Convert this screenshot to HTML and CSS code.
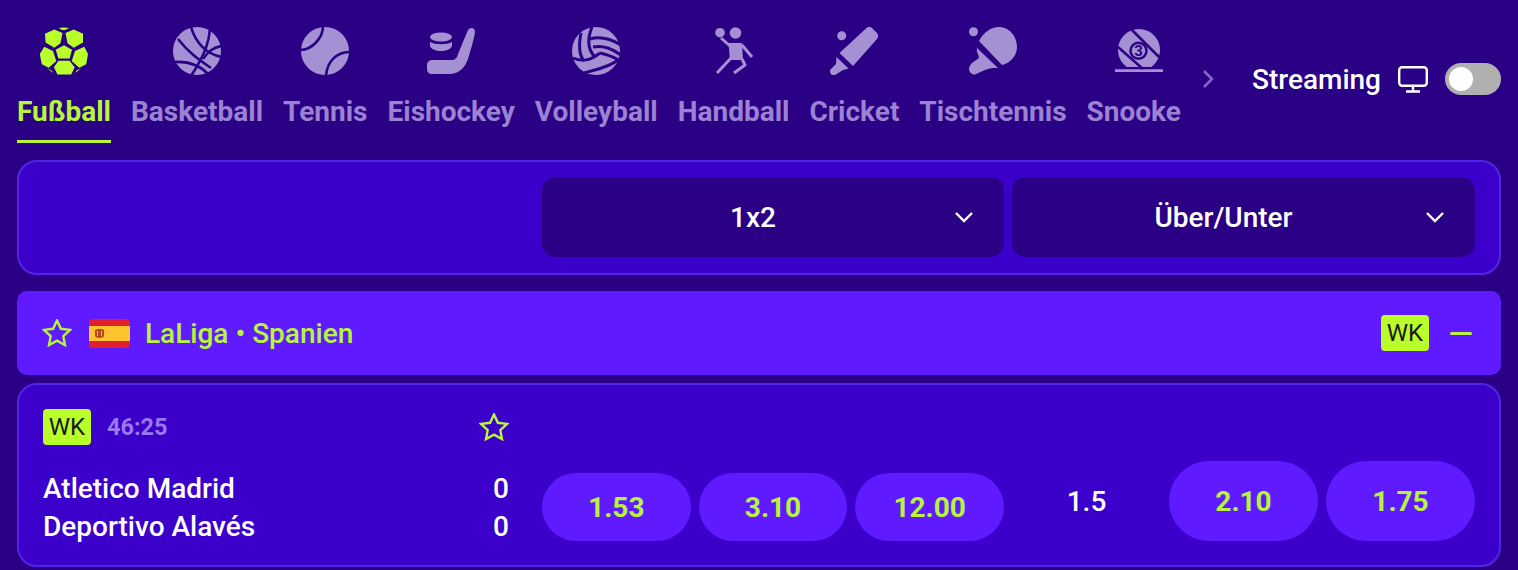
FILE: index.html
```html
<!DOCTYPE html>
<html lang="de">
<head>
    <meta charset="UTF-8">
    <meta name="viewport" content="width=device-width, initial-scale=1.0">
    <title>Live Wetten</title>
    <link rel="stylesheet" href="styles.css">
</head>
<body>
    <div class="top">
        <div class="tabs">
            <div class="tab active">
                <svg class="sport" viewBox="0 0 48 48"><path d="M24 18.200 32 22.700 29.600 31.600H18.400L15.700 22.700ZM14.300 2.600 22.500 6 20.500 16.300 14.300 20.700 5.600 15.500 5 6.800ZM25.500 6 33.700 2.600 43 6.800 43 15.500 33.700 20.700 27.500 16.300ZM4.300 19.800 13 24 16.300 33.900 8.700 40.700 1.800 37.300-.2 27ZM35 24 44.300 19.800 48 27 46.200 37.300 39.300 40.700 31.700 33.900ZM18.500 33.800H29.500L34.700 40.300 31.200 47.400H17.500L13.900 40.300ZM18.700 1 24 .4 29.300 1 25.300 3H22ZM7 41 11.500 43.500 13 46ZM41 41 35.500 46 36.500 43.500Z"/></svg>
                <span>Fußball</span>
            </div>
            <div class="tab">
                <svg class="sport" viewBox="0 0 48 48"><circle cx="24" cy="24" r="24"/><g class="cut"><path d="M18 0C22 14 32 27 49 30"/><path d="M5 12C15 25 25 32 38 41"/><path d="M1 35C15 34 27 38 36 48"/><path d="M37 2C36 14 33 26 18 49"/><path d="M49 19C40 20 35 25 30 32"/></g></svg>
                <span>Basketball</span>
            </div>
            <div class="tab">
                <svg class="sport" viewBox="0 0 48 48"><circle cx="24" cy="24" r="24"/><g class="cut"><path d="M22-1C22 11 11 23-1 23"/><path d="M49 25C36 25 26 34 25 49"/></g></svg>
                <span>Tennis</span>
            </div>
            <div class="tab">
                <svg class="sport" viewBox="0 0 48 48"><ellipse cx="14" cy="10" rx="11" ry="4.500"/><path d="M3 15C8 18 20 18 25 15V18C25 22 19 24 14 24S3 22 3 18ZM41 3C43 0 48 0 48 5 47.500 10 44 22 41 32 38 40 33 47 22 47H5C2 47 0 45 0 42V38C0 35 2 33 6 33H24C28 33 30 31 31 27Z"/></svg>
                <span>Eishockey</span>
            </div>
            <div class="tab">
                <svg class="sport" viewBox="0 0 48 48"><circle cx="24" cy="24" r="24"/><g class="cut thick"><path d="M20 0C16 10 15 22 23 30"/><path d="M9 6C7 16 7 28 12 34"/><path d="M18 12C28 9 39 12 49 18"/><path d="M21 20C32 18 40 22 49 28"/><path d="M1 31C10 35 18 34 28 26"/><path d="M28 26C34 27 41 30 47 33"/><path d="M12 46C22 43 36 41 46 33"/></g></svg>
                <span>Volleyball</span>
            </div>
            <div class="tab">
                <svg class="sport" viewBox="0 0 48 48"><circle cx="10" cy="5.700" r="4.800"/><circle cx="25.500" cy="6" r="5.800"/><path class="limb" d="M11 11 20 19M32 18 42 30M32 32 35 38 24 46M21 31 7 46"/><path d="M18.500 16H32L33 33H20Z"/></svg>
                <span>Handball</span>
            </div>
            <div class="tab">
                <svg class="sport" viewBox="0 0 48 48"><circle cx="11.700" cy="8.700" r="4.500"/><path d="M36 1.500C38-.5 40-.5 42 1L47 6C48.500 8 48.500 10 47 12L23 39 9.500 26ZM6.500 30 18.500 41.500 13 43 6 47.500C4 49 2 48.500 1 47-.5 45.500-.5 43.500 1 42L6 37Z"/></svg>
                <span>Cricket</span>
            </div>
            <div class="tab">
                <svg class="sport" viewBox="0 0 48 48"><circle cx="4.500" cy="4.700" r="4.500"/><path d="M10 14C15 5 22 0 30 0 40 0 48 9 48 20 48 28 42 36 33 38ZM8 21 29 41 24 41C21 41 19 42 16 43L7 47C4 49 0 45 0 42 0 40 1 38 3 36L10 31C10 27 7 26 8 21Z"/></svg>
                <span>Tischtennis</span>
            </div>
            <div class="tab snooker">
                <svg class="sport" viewBox="0 0 48 48"><path d="M11.700 40A21 21 0 1 1 36.300 40ZM0 42.300H48V45H0Z"/><path class="band" d="M16 2 44 30M3 20 28 42"/><circle class="ring" cx="23.500" cy="23.700" r="8"/><text class="ball-no" x="23.500" y="29">3</text></svg>
                <span>Snooker</span>
            </div>
        </div>
        <svg class="next" viewBox="0 0 12 20"><path d="M2 2 10 10 2 18"/></svg>
        <div class="streaming">
            <span>Streaming</span>
            <svg class="monitor" viewBox="0 0 30 27"><rect x="1.200" y="1.200" width="27.600" height="18.500" rx="3"/><path d="M15 20V25.500M8 25.500H22"/></svg>
            <div class="toggle"><div class="knob"></div></div>
        </div>
    </div>

    <div class="filters">
        <div class="select"><span>1x2</span><svg class="arrow" viewBox="0 0 20 12"><path d="M2 2 10 10 18 2"/></svg></div>
        <div class="select wide"><span>Über/Unter</span><svg class="arrow" viewBox="0 0 20 12"><path d="M2 2 10 10 18 2"/></svg></div>
    </div>

    <div class="league">
        <svg class="star" viewBox="0 .5 30 28"><path d="M15 2 18.900 10.300 28 11.400 21.300 17.600 23 26.600 15 22.200 7 26.600 8.700 17.600 2 11.400 11.100 10.300Z"/></svg>
        <svg class="flag" viewBox="0 0 41 29">
            <rect width="41" height="29" rx="4" fill="#e0202c"/>
            <rect y="7" width="41" height="15" fill="#fdc42e"/>
            <path d="M6 11C7 9.500 14 9.500 15 11V17C14 19.500 7 19.500 6 17Z" fill="#b8481c"/><path d="M8 12H9V17H8ZM12 12H13V17H12Z" fill="#fdc42e"/>
        </svg>
        <span class="league-name">LaLiga • Spanien</span>
        <span class="badge">WK</span>
        <div class="minus"></div>
    </div>

    <div class="match">
        <div class="info">
            <div class="info-top">
                <span class="badge">WK</span>
                <span class="clock">46:25</span>
                <svg class="star" viewBox="0 .5 30 28"><path d="M15 2 18.900 10.300 28 11.400 21.300 17.600 23 26.600 15 22.200 7 26.600 8.700 17.600 2 11.400 11.100 10.300Z"/></svg>
            </div>
            <div class="team"><span>Atletico Madrid</span><span>0</span></div>
            <div class="team"><span>Deportivo Alavés</span><span>0</span></div>
        </div>
        <div class="market">
            <button class="odd">1.53</button>
            <button class="odd">3.10</button>
            <button class="odd">12.00</button>
        </div>
        <div class="market tall">
            <div class="line">1.5</div>
            <button class="odd">2.10</button>
            <button class="odd">1.75</button>
        </div>
    </div>
</body>
</html>
```

FILE: styles.css
```css
body{
    margin: 0;
    height: 570px;
    overflow: hidden;
    padding: 0 17px;
    background-color: #2a0084;
    font-family: Roboto, "Liberation Sans", sans-serif;
    color: #fff;
}
.top{
    display: flex;
    align-items: center;
    height: 143px;
    margin-bottom: 17px;
}
.tabs{
    display: flex;
    gap: 20px;
    width: 1164px;
    height: 143px;
    overflow: hidden;
    flex-shrink: 0;
}
.tab{
    display: flex;
    flex-direction: column;
    align-items: center;
    flex-shrink: 0;
    box-sizing: border-box;
    height: 143px;
    padding-top: 27px;
    font-size: 28px;
    font-weight: 700;
    color: #9b82d2;
    border-bottom: 3px solid transparent;
}
.tab span{
    margin-top: 21px;
    line-height: 32px;
}
.tab.active{
    color: #b9f43c;
    border-bottom-color: #b9f43c;
}
.sport{
    width: 48px;
    height: 48px;
    fill: #a690d4;
    flex-shrink: 0;
}
.active .sport{
    fill: #b9ff2a;
}
.cut path{
    fill: none;
    stroke: #2a0084;
    stroke-width: 2.600;
}
.cut.thick path{
    stroke-width: 3;
}
.limb{
    fill: none;
    stroke: #a690d4;
    stroke-width: 3;
    stroke-linejoin: round;
}
.band{
    fill: none;
    stroke: #2a0084;
    stroke-width: 2.500;
}
.ring{
    fill: #a690d4;
    stroke: #2a0084;
    stroke-width: 2.500;
}
.ball-no{
    font-size: 15px;
    font-weight: 700;
    fill: #2a0084;
    text-anchor: middle;
}
.next{
    width: 12px;
    height: 20px;
    margin: 15px 0 0 21px;
    fill: none;
    stroke: #8468cc;
    stroke-width: 2.500;
}
.streaming{
    display: flex;
    align-items: center;
    margin: 15px 0 0 38px;
    font-size: 28px;
    font-weight: 500;
}
.monitor{
    width: 30px;
    height: 27px;
    margin-left: 17px;
    fill: none;
    stroke: #fff;
    stroke-width: 2.400;
}
.toggle{
    width: 56px;
    height: 32px;
    margin-left: 17px;
    padding: 4px;
    box-sizing: border-box;
    border-radius: 16px;
    background-color: #b0b0b0;
}
.knob{
    width: 24px;
    height: 24px;
    border-radius: 50%;
    background-color: #fff;
}
.filters{
    display: flex;
    justify-content: flex-end;
    gap: 8px;
    box-sizing: border-box;
    height: 115px;
    padding: 15px 24px 16px 0;
    margin-bottom: 16px;
    border: 2px solid #5424e6;
    border-radius: 20px;
    background-color: #3b00ca;
}
.select{
    display: flex;
    align-items: center;
    box-sizing: border-box;
    width: 462px;
    padding: 0 30px 0 10px;
    border-radius: 14px;
    background-color: #2a0084;
    font-size: 28px;
    font-weight: 500;
}
.select.wide{
    width: 463px;
}
.select span{
    flex: 1;
    text-align: center;
}
.arrow{
    width: 20px;
    height: 12px;
    fill: none;
    stroke: #fff;
    stroke-width: 2.400;
}
.league{
    display: flex;
    align-items: center;
    box-sizing: border-box;
    height: 84px;
    padding: 0 29px 0 25px;
    margin-bottom: 8px;
    border-radius: 10px;
    background-color: #5f1aff;
}
.star{
    width: 30px;
    height: 28px;
    fill: none;
    stroke: #b9f43c;
    stroke-width: 2.400;
    flex-shrink: 0;
}
.flag{
    width: 41px;
    height: 29px;
    margin-left: 17px;
    flex-shrink: 0;
}
.league-name{
    flex: 1;
    margin-left: 15px;
    font-size: 28px;
    font-weight: 500;
    color: #b9f43c;
}
.badge{
    width: 48px;
    height: 36px;
    line-height: 36px;
    text-align: center;
    flex-shrink: 0;
    border-radius: 4px;
    background-color: #b9ff2a;
    color: #1d1a10;
    font-size: 24px;
}
.minus{
    width: 22px;
    height: 3px;
    margin-left: 21px;
    border-radius: 2px;
    background-color: #b9f43c;
}
.match{
    display: flex;
    box-sizing: border-box;
    height: 184px;
    padding: 24px;
    border: 2px solid #5424e6;
    border-radius: 20px;
    background-color: #3b00ca;
}
.info{
    width: 466px;
    margin-right: 33px;
    flex-shrink: 0;
}
.info-top{
    display: flex;
    align-items: center;
    height: 36px;
    margin-bottom: 25px;
}
.clock{
    flex: 1;
    margin-left: 16px;
    font-size: 23.500px;
    font-weight: 700;
    color: #9c78f0;
}
.team{
    display: flex;
    justify-content: space-between;
    height: 38px;
    line-height: 38px;
    font-size: 28px;
    font-weight: 500;
}
.market{
    display: flex;
    gap: 8px;
    width: 462px;
    height: 68px;
    margin-top: 64px;
    flex-shrink: 0;
}
.market.tall{
    width: 463px;
    height: 80px;
    margin-top: 52px;
    margin-left: 8px;
}
.line{
    flex: 0 0 149px;
    align-self: center;
    text-align: center;
    font-size: 28px;
    font-weight: 500;
}
.odd{
    flex: 1;
    border: none;
    border-radius: 40px;
    background-color: #5f1aff;
    color: #b9f43c;
    font-family: inherit;
    font-size: 28px;
    font-weight: 700;
}
```
